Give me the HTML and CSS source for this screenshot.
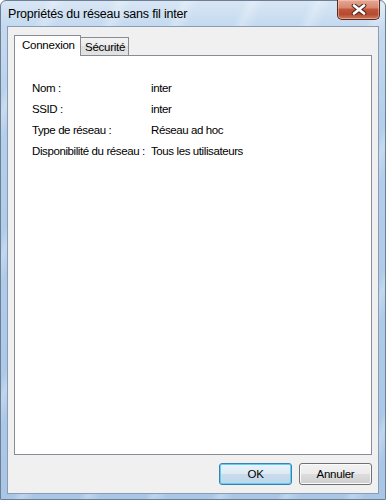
FILE: index.html
```html
<!DOCTYPE html>
<html>
<head>
    <title>Propriétés du réseau sans fil inter</title>
    <link rel="stylesheet" href="styles.css">
</head>
<body>
    <div class="window">
        <div class="titlebar">
            <span class="title">Propriétés du réseau sans fil inter</span>
            <div class="close">
                <svg width="16" height="11" viewBox="0 0 16 11">
                    <path d="M3 1.5 L13 9.5 M13 1.5 L3 9.5" stroke="#4a1f14" stroke-width="4.6" stroke-linecap="round"/>
                    <path d="M3 1.5 L13 9.5 M13 1.5 L3 9.5" stroke="#fff" stroke-width="2.8" stroke-linecap="round"/>
                </svg>
            </div>
        </div>
        <div class="client">
            <div class="tabs">
                <div class="tab active">Connexion</div>
                <div class="tab">Sécurité</div>
            </div>
            <div class="panel">
                <div class="props">
                    <span>Nom :</span><span>inter</span>
                    <span>SSID :</span><span>inter</span>
                    <span>Type de réseau :</span><span>Réseau ad hoc</span>
                    <span>Disponibilité du réseau :</span><span>Tous les utilisateurs</span>
                </div>
            </div>
            <div class="buttons">
                <button class="btn default">OK</button>
                <button class="btn">Annuler</button>
            </div>
        </div>
    </div>
</body>
</html>
```

FILE: styles.css
```css
body {
    margin: 0;
    background: #fff;
    font-family: "Liberation Sans", Arial, sans-serif;
    font-size: 11.5px;
    letter-spacing: -0.25px;
    color: #000;
}

.window {
    position: relative;
    width: 386px;
    height: 500px;
    box-sizing: border-box;
    border: 1px solid #6d7f94;
    border-radius: 6px 6px 0 0;
    background:
        repeating-linear-gradient(115deg, rgba(255, 255, 255, 0) 0, rgba(255, 255, 255, 0) 40px, rgba(255, 255, 255, 0.25) 48px, rgba(255, 255, 255, 0) 60px),
        linear-gradient(180deg, #d8e6f4 0, #c5daf0 24px, #b4cfeb 120px, #a9c6e7 100%);
    display: flex;
    flex-direction: column;
}

.titlebar {
    height: 25px;
    display: flex;
    align-items: center;
    padding-left: 7px;
}

.title {
    font-size: 12.5px;
    letter-spacing: -0.2px;
    color: #000;
}

.close {
    position: absolute;
    top: -1px;
    right: 5px;
    width: 43px;
    height: 20px;
    box-sizing: border-box;
    border: 1px solid #5a2a20;
    border-top: none;
    border-radius: 0 0 5px 5px;
    background: linear-gradient(180deg, #e6a896 0%, #d88870 40%, #c0553b 50%, #b44a30 75%, #d07a5c 100%);
    box-shadow: inset 0 0 0 1px rgba(255, 220, 200, 0.45);
    display: flex;
    align-items: center;
    justify-content: center;
}

.client {
    flex: 1;
    margin: 0 6px 5px 6px;
    border: 1px solid #8a9cb3;
    background: #f0f0f0;
    padding: 8px 6px 8px 6px;
    display: flex;
    flex-direction: column;
}

.tabs {
    display: flex;
    align-items: flex-end;
    height: 20px;
}

.tab {
    position: relative;
    box-sizing: border-box;
    border: 1px solid #898c95;
    border-bottom: none;
    height: 18px;
    width: 49px;
    padding: 0 0 0 4px;
    display: flex;
    align-items: center;
    background: linear-gradient(180deg, #f3f3f3 0%, #ebebeb 50%, #dedede 50%, #e3e3e3 100%);
    margin-left: -1px;
}

.tab.active {
    z-index: 1;
    height: 21px;
    margin-bottom: -1px;
    margin-left: 0;
    width: 67px;
    padding: 0 0 3px 7px;
    background: #fff;
}

.panel {
    flex: 1;
    border: 1px solid #898c95;
    background: #fff;
    padding: 21px 17px 0 17px;
}

.props {
    display: grid;
    grid-template-columns: 119px auto;
    grid-auto-rows: 21px;
    align-items: center;
    letter-spacing: -0.4px;
}

.buttons {
    display: flex;
    justify-content: flex-end;
    gap: 7px;
    margin-top: 8px;
}

.btn {
    width: 73px;
    height: 22px;
    box-sizing: border-box;
    border: 1px solid #707070;
    border-radius: 3px;
    background: linear-gradient(180deg, #f2f2f2 0%, #ebebeb 50%, #dddddd 50%, #cfcfcf 100%);
    box-shadow: inset 0 0 0 1px #fbfbfb;
    font-family: "Liberation Sans", Arial, sans-serif;
    font-size: 11.5px;
    letter-spacing: -0.25px;
    color: #000;
    padding: 0;
}

.btn.default {
    border-color: #3c7fb1;
    background: linear-gradient(180deg, #eaf3fa 0%, #dde9f3 50%, #c9dcec 50%, #bfd6ea 100%);
    box-shadow: inset 0 0 0 1px #5fd0f5;
}
```
